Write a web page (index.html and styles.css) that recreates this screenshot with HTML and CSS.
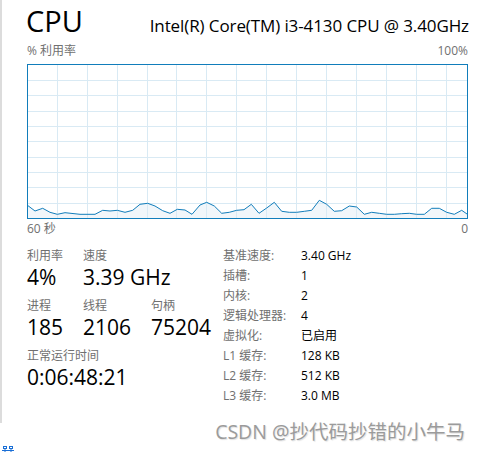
FILE: index.html
```html
<!DOCTYPE html>
<html lang="zh-CN">
<head>
<meta charset="utf-8">
<title>CPU</title>
<link rel="stylesheet" href="styles.css">
</head>
<body>
<div class="frame">
  <div class="panel">
    <div class="header">
      <span class="title">CPU</span>
      <span class="model">Intel(R) Core(TM) i3-4130 CPU @ 3.40GHz</span>
    </div>
    <div class="axis axis-top"><span>% 利用率</span><span>100%</span></div>
    <div class="graph">
      <svg class="graph-svg" width="439" height="153" viewBox="0 0 439 153">
        <polygon class="area" points="0,140.7 7,146 14.7,143.3 22,147.3 29.3,149.3 37,147.7 52,149.3 67,149.3 74.7,145.3 82,146 89.3,145.3 97,147.3 104.7,145.3 112,139.3 119.7,138.3 127,141 134.7,145.7 142,148.3 149.3,144.3 157,145 164,149.3 172,140 178.7,137.3 186.3,141 193.7,148.3 201.3,147.3 208.7,145.3 216,144.7 223.3,139.3 231,148.3 238.7,143 246.3,137.3 253.7,146.3 261.3,147.3 268.7,147.3 276.3,146.3 283.7,145.3 291.3,135.3 298.7,139.3 306.3,146.3 313.7,145.7 321.3,141 328.7,142 336.3,149.3 343.7,147.3 351.3,148.3 358.7,149.3 366.3,149.3 373.7,148.7 381.3,148.3 388.7,149.3 396.3,149.3 403.7,143.3 411.3,143.3 418.7,147.3 426.3,149.3 433.7,145.3 439,149 439,153 0,153"/>
        <g class="grid">
          <line x1="29.5" y1="0" x2="29.5" y2="153"/>
          <line x1="59.5" y1="0" x2="59.5" y2="153"/>
          <line x1="89.5" y1="0" x2="89.5" y2="153"/>
          <line x1="119.5" y1="0" x2="119.5" y2="153"/>
          <line x1="148.5" y1="0" x2="148.5" y2="153"/>
          <line x1="178.5" y1="0" x2="178.5" y2="153"/>
          <line x1="208.5" y1="0" x2="208.5" y2="153"/>
          <line x1="238.5" y1="0" x2="238.5" y2="153"/>
          <line x1="268.5" y1="0" x2="268.5" y2="153"/>
          <line x1="298.5" y1="0" x2="298.5" y2="153"/>
          <line x1="328.5" y1="0" x2="328.5" y2="153"/>
          <line x1="358.5" y1="0" x2="358.5" y2="153"/>
          <line x1="388.5" y1="0" x2="388.5" y2="153"/>
          <line x1="418.5" y1="0" x2="418.5" y2="153"/>
          <line x1="0" y1="15.5" x2="439" y2="15.5"/>
          <line x1="0" y1="30.5" x2="439" y2="30.5"/>
          <line x1="0" y1="46.5" x2="439" y2="46.5"/>
          <line x1="0" y1="61.5" x2="439" y2="61.5"/>
          <line x1="0" y1="76.5" x2="439" y2="76.5"/>
          <line x1="0" y1="92.5" x2="439" y2="92.5"/>
          <line x1="0" y1="107.5" x2="439" y2="107.5"/>
          <line x1="0" y1="122.5" x2="439" y2="122.5"/>
          <line x1="0" y1="138.5" x2="439" y2="138.5"/>
        </g>
        <polyline class="trace" points="0,140.7 7,146 14.7,143.3 22,147.3 29.3,149.3 37,147.7 52,149.3 67,149.3 74.7,145.3 82,146 89.3,145.3 97,147.3 104.7,145.3 112,139.3 119.7,138.3 127,141 134.7,145.7 142,148.3 149.3,144.3 157,145 164,149.3 172,140 178.7,137.3 186.3,141 193.7,148.3 201.3,147.3 208.7,145.3 216,144.7 223.3,139.3 231,148.3 238.7,143 246.3,137.3 253.7,146.3 261.3,147.3 268.7,147.3 276.3,146.3 283.7,145.3 291.3,135.3 298.7,139.3 306.3,146.3 313.7,145.7 321.3,141 328.7,142 336.3,149.3 343.7,147.3 351.3,148.3 358.7,149.3 366.3,149.3 373.7,148.7 381.3,148.3 388.7,149.3 396.3,149.3 403.7,143.3 411.3,143.3 418.7,147.3 426.3,149.3 433.7,145.3 439,149"/>
      </svg>
    </div>
    <div class="axis axis-bottom"><span>60 秒</span><span>0</span></div>

    <div class="details">
      <div class="live">
        <div class="stat-row">
          <div class="stat stat-util"><div class="stat-label">利用率</div><div class="stat-value">4%</div></div>
          <div class="stat"><div class="stat-label">速度</div><div class="stat-value">3.39 GHz</div></div>
        </div>
        <div class="stat-row">
          <div class="stat stat-util"><div class="stat-label">进程</div><div class="stat-value">185</div></div>
          <div class="stat stat-threads"><div class="stat-label">线程</div><div class="stat-value">2106</div></div>
          <div class="stat"><div class="stat-label">句柄</div><div class="stat-value">75204</div></div>
        </div>
        <div class="stat-row">
          <div class="stat"><div class="stat-label">正常运行时间</div><div class="stat-value">0:06:48:21</div></div>
        </div>
      </div>
      <dl class="specs">
        <dt>基准速度:</dt><dd>3.40 GHz</dd>
        <dt>插槽:</dt><dd>1</dd>
        <dt>内核:</dt><dd>2</dd>
        <dt>逻辑处理器:</dt><dd>4</dd>
        <dt>虚拟化:</dt><dd>已启用</dd>
        <dt>L1 缓存:</dt><dd>128 KB</dd>
        <dt>L2 缓存:</dt><dd>512 KB</dd>
        <dt>L3 缓存:</dt><dd>3.0 MB</dd>
      </dl>
    </div>
  </div>
</div>
<svg class="net-icon" width="12" height="8" viewBox="0 0 12 8">
  <rect x="1.5" y="1.5" width="3" height="2" fill="none" stroke="#1a6fd6" stroke-width="1"/>
  <rect x="7.5" y="1.5" width="3" height="2" fill="none" stroke="#1a6fd6" stroke-width="1"/>
  <line x1="0" y1="5.5" x2="12" y2="5.5" stroke="#1a6fd6" stroke-width="1"/>
  <line x1="3" y1="4" x2="3" y2="8" stroke="#1a6fd6" stroke-width="1"/>
  <line x1="9" y1="4" x2="9" y2="8" stroke="#1a6fd6" stroke-width="1"/>
</svg>
<div class="watermark">CSDN @抄代码抄错的小牛马</div>
</body>
</html>
```

FILE: styles.css
```css
html, body {
  margin: 0;
  padding: 0;
}

body {
  width: 480px;
  height: 452px;
  background: #ffffff;
  position: relative;
  overflow: hidden;
  font-family: "Open Sans", "Noto Sans CJK SC", sans-serif;
  color: #000000;
}

.frame {
  box-sizing: border-box;
  width: 480px;
  height: 423px;
  border-left: 2px solid #dcdcdc;
  padding-left: 25px;
}

.panel {
  width: 441px;
}

.header {
  display: flex;
  justify-content: space-between;
  align-items: baseline;
  height: 42px;
}

.title {
  font-size: 29px;
  line-height: 42px;
  margin-left: -1px;
}

.model {
  font-size: 17px;
  letter-spacing: -0.1px;
  margin-right: -1px;
}

.axis {
  display: flex;
  justify-content: space-between;
  font-size: 12px;
  color: #707070;
}

.axis-top {
  line-height: 17px;
  margin-bottom: 5px;
}

.axis-bottom {
  line-height: 20px;
}

.graph {
  box-sizing: border-box;
  width: 441px;
  height: 155px;
  border: 1px solid #117dbb;
  background: #ffffff;
}

.graph-svg {
  display: block;
}

.area {
  fill: #f1f6fa;
}

.grid line {
  stroke: #d9eaf4;
  stroke-width: 1;
}

.trace {
  fill: none;
  stroke: #117dbb;
  stroke-width: 1;
  stroke-linejoin: round;
}

.details {
  display: flex;
  margin-top: 9px;
}

.live {
  width: 196px;
  display: flex;
  flex-direction: column;
  gap: 8px;
}

.stat-row {
  display: flex;
}

.stat-util {
  width: 56px;
}

.stat-threads {
  width: 68px;
}

.stat-label {
  font-size: 12px;
  line-height: 16px;
  color: #707070;
}

.stat-value {
  font-size: 21px;
  line-height: 26px;
  white-space: nowrap;
}

.specs {
  margin: -2px 0 0 0;
  display: grid;
  grid-template-columns: 78px auto;
  font-size: 12px;
  line-height: 20px;
}

.specs dt {
  color: #707070;
}

.specs dd {
  margin: 0;
  color: #000000;
}

.net-icon {
  position: absolute;
  left: 2px;
  top: 445px;
}

.watermark {
  position: absolute;
  right: 15px;
  top: 419px;
  font-size: 19.5px;
  line-height: 26px;
  color: #9b9b9b;
  text-shadow: 1px 1px 1px rgba(0, 0, 0, 0.12);
  white-space: nowrap;
}
```
